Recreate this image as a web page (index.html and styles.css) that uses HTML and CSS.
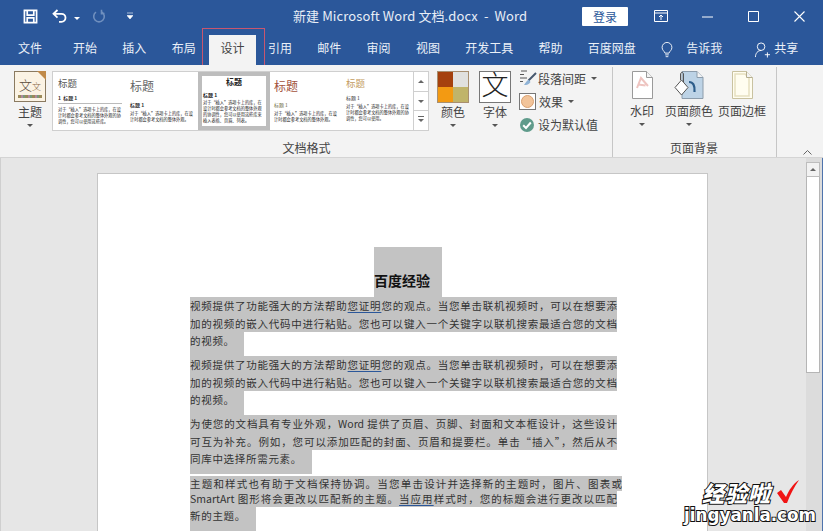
FILE: index.html
```html
<!DOCTYPE html>
<html lang="zh-CN">
<head>
  <meta charset="UTF-8" />
  <title>新建 Microsoft Word 文档.docx - Word</title>
  <link rel="stylesheet" href="styles.css">
</head>
<body>
  <div class="app">
    <header class="titlebar">
      <div class="qat">
        <svg class="ic-save" width="15" height="15" viewBox="0 0 16 16"><path d="M1.500 1.500h13v13h-13z M4.500 1.500v5h7v-5 M4.500 14.500v-5h7v5" fill="none" stroke="#fff" stroke-width="1.800"/></svg>
        <svg class="ic-undo" width="16" height="14" viewBox="0 0 16 14"><path d="M5.500 1 1.500 4.800l4 3.800M2 4.800h7.500a4 4 0 0 1 0 8H7" fill="none" stroke="#fff" stroke-width="1.800"/></svg>
        <span class="caret caret-white"></span>
        <svg class="ic-redo" width="14" height="14" viewBox="0 0 14 14"><path d="M4 3.200a5.300 5.300 0 1 0 6 0M9.500 .8v3.800h3" fill="none" stroke="#6f8fbe" stroke-width="1.600"/></svg>
        <svg class="ic-custom" width="6" height="8" viewBox="0 0 6 8"><path d="M0 1h6M0 3.500h6l-3 3.500z" fill="#fff" stroke="#fff" stroke-width=".6"/></svg>
      </div>
      <div class="doc-title">新建 Microsoft Word 文档.docx&nbsp; -&nbsp; Word</div>
      <div class="win">
        <button class="login">登录</button>
        <svg class="ic-display" width="14" height="12" viewBox="0 0 14 12"><path d="M.5 .5h13v11H.5zM.5 3h13M7 10V5M5 7l2-2 2 2" fill="none" stroke="#fff"/></svg>
        <svg class="ic-min" width="11" height="11" viewBox="0 0 11 11"><path d="M0 6h11" stroke="#fff"/></svg>
        <svg class="ic-max" width="11" height="11" viewBox="0 0 11 11"><path d="M.5 .5h10v10H.5z" fill="none" stroke="#fff"/></svg>
        <svg class="ic-close" width="11" height="11" viewBox="0 0 11 11"><path d="M.5 .5l10 10M10.500 .5l-10 10" stroke="#fff" stroke-width="1.100"/></svg>
      </div>
    </header>

    <nav class="tabs">
      <span class="tab tab-file">文件</span>
      <span class="tab">开始</span>
      <span class="tab">插入</span>
      <span class="tab">布局</span>
      <span class="tab tab-active">设计</span>
      <span class="tab">引用</span>
      <span class="tab">邮件</span>
      <span class="tab">审阅</span>
      <span class="tab">视图</span>
      <span class="tab">开发工具</span>
      <span class="tab">帮助</span>
      <span class="tab">百度网盘</span>
      <svg class="ic-bulb" width="12" height="16" viewBox="0 0 13 18"><path d="M4.200 12.500C3.500 10 1 9.500 1 6a5.500 5.500 0 0 1 11 0c0 3.500-2.500 4-3.200 6.500zM4.500 14.500h4M5 16.500h3" fill="none" stroke="#fff"/></svg>
      <span class="tab tab-tell">告诉我</span>
      <svg class="ic-user" width="17" height="16" viewBox="0 0 17 17"><path d="M7 1a4 4 0 0 1 0 8 4 4 0 0 1 0-8zM1 16c0-4 2.500-7 6-7M11 13.500h5.500M13.700 11v5.500" fill="none" stroke="#fff"/></svg>
      <span class="tab tab-share">共享</span>
    </nav>

    <section class="ribbon">
      <div class="group group-format">
        <div class="group-body">
          <div class="big-btn btn-theme">
            <div class="theme-icon">
              <span class="theme-a">文</span><span class="theme-b">文</span>
              <span class="theme-dots"></span>
              <span class="theme-fold"></span>
            </div>
            <span class="big-label">主题</span>
            <span class="caret"></span>
          </div>

          <div class="gallery">
            <div class="thumb">
              <div class="th-title th-small">标题</div>
              <div class="th-head th-rule">1&nbsp; 标题 1</div>
              <p class="th-text">对于“插入”选项卡上的库，在设计时都会参考文档的整体外观的协调性，您可以使用这些库。</p>
            </div>
            <div class="thumb">
              <div class="th-title th-big">标题</div>
              <div class="th-head">标题 1</div>
              <p class="th-text">对于“插入”选项卡上的库，在设计时都会参考文档的整体外观。</p>
            </div>
            <div class="thumb thumb-sel">
              <div class="th-title th-center">标题</div>
              <div class="th-head th-bold">标题 1</div>
              <p class="th-text">对于“插入”选项卡上的库，在设计时都会参考文档的整体外观的协调性，您可以使用这些库来插入表格、页眉、列表。</p>
            </div>
            <div class="thumb">
              <div class="th-title th-big th-red">标题</div>
              <div class="th-head th-olive">标题 1</div>
              <p class="th-text">对于“插入”选项卡上的库，在设计时都会参考文档的整体外观。</p>
            </div>
            <div class="thumb">
              <div class="th-title th-small th-tan">标题</div>
              <div class="th-head th-tan th-thin">标题 1</div>
              <p class="th-text">对于“插入”选项卡上的库，在设计时都会参考文档的整体外观的协调性，您可以使用。</p>
            </div>
            <div class="gallery-scroll">
              <span class="gs-btn"><i class="tri-up"></i></span>
              <span class="gs-btn"><i class="tri-down"></i></span>
              <span class="gs-btn gs-more"><i class="tri-down"></i></span>
            </div>
          </div>

          <div class="big-btn btn-colors">
            <div class="colors-icon">
              <i class="c1"></i><i class="c2"></i><i class="c3"></i><i class="c4"></i>
            </div>
            <span class="big-label">颜色</span>
            <span class="caret"></span>
          </div>

          <div class="big-btn btn-font">
            <div class="font-icon">文</div>
            <span class="big-label">字体</span>
            <span class="caret"></span>
          </div>

          <div class="small-col">
            <div class="small-btn">
              <svg class="ic-spacing" width="18" height="17" viewBox="0 0 18 17"><path d="M2 1h6M1 4.500h4M1 8h7M1 11.500h3" stroke="#555" fill="none"/><path d="M17 3 9.500 10.500" stroke="#46586e" stroke-width="2"/><path d="M10 10c-2 0-3 2-5 5 3 0 5-.5 6.500-3z" fill="#8fb3d6"/></svg>
              <span>段落间距</span><span class="caret caret-side"></span>
            </div>
            <div class="small-btn">
              <span class="effect-icon"><i></i></span>
              <span>效果</span><span class="caret caret-side"></span>
            </div>
            <div class="small-btn">
              <svg width="16" height="16" viewBox="0 0 16 16"><circle cx="8" cy="8" r="7" fill="#5f9b8b"/><path d="M4.200 8.200 7 11l4.800-5.500" fill="none" stroke="#fff" stroke-width="2"/></svg>
              <span>设为默认值</span>
            </div>
          </div>
        </div>
        <div class="group-name">文档格式</div>
      </div>

      <div class="group group-page">
        <div class="group-body">
          <div class="big-btn btn-mark">
            <svg width="21" height="28" viewBox="0 0 21 28"><path d="M.5 .5h14l6 6v21H.5z" fill="#fff" stroke="#9a9a9a"/><path d="M14.500 .5v6h6" fill="#f3f3f3" stroke="#9a9a9a"/><path d="M5 17 9 7l7 8M6.500 13.500l7 1" fill="none" stroke="#eec4c0" stroke-width="2"/></svg>
            <span class="big-label">水印</span>
            <span class="caret"></span>
          </div>
          <div class="big-btn btn-pagecolor">
            <svg width="40" height="28" viewBox="0 0 40 28"><path d="M17 .5h15l6 6v21H17z" fill="#bdd3e6" stroke="#8c9cab"/><path d="M32 .5v6h6" fill="#f3f3f3" stroke="#8c9cab"/><path d="M10 16.500 16.500 9l6.500 7.500-6.500 7.500z" fill="#fff" stroke="#555"/><path d="M24 11c4 0 6 3 5.500 10" fill="none" stroke="#2d5d8a" stroke-width="2.200"/><path d="M15.500 9V3c0-2 3-2 3 0v8" fill="none" stroke="#555"/></svg>
            <span class="big-label">页面颜色</span>
            <span class="caret"></span>
          </div>
          <div class="big-btn btn-border">
            <svg width="21" height="28" viewBox="0 0 21 28"><path d="M.5 .5h14l6 6v21H.5z" fill="#fffdf0" stroke="#c9c2a0" stroke-width="1"/><path d="M3 3h10l4 4v18H3z" fill="none" stroke="#e6dfc0" stroke-width="1.500"/><path d="M14.500 .5v6h6" fill="#f3f3f3" stroke="#b5ae90"/></svg>
            <span class="big-label">页面边框</span>
          </div>
        </div>
        <div class="group-name">页面背景</div>
      </div>

      <svg class="ic-collapse" width="9" height="5" viewBox="0 0 9 5"><path d="M.5 4.500l4-4 4 4" fill="none" stroke="#666"/></svg>
    </section>

    <main class="workspace">
      <div class="canvas">
        <article class="page">
          <div class="doc-title-line"><h1 class="doc-heading">百度经验</h1></div>
          <div class="para">
            <div class="ln">视频提供了功能强大的方法帮助<u>您证明</u>您的观点。当您单击联机视频时，可以在想要添</div>
            <div class="ln">加的视频的嵌入代码中进行粘贴。您也可以键入一个关键字以联机搜索最适合您的文档</div>
            <div class="ln ln-end ln-w54">的视频。</div>
          </div>
          <div class="para">
            <div class="ln">视频提供了功能强大的方法帮助<u>您证明</u>您的观点。当您单击联机视频时，可以在想要添</div>
            <div class="ln">加的视频的嵌入代码中进行粘贴。您也可以键入一个关键字以联机搜索最适合您的文档</div>
            <div class="ln ln-end ln-w54">的视频。</div>
          </div>
          <div class="para">
            <div class="ln">为使您的文档具有专业外观，Word 提供了页眉、页脚、封面和文本框设计，这些设计</div>
            <div class="ln">可互为补充。例如，您可以添加匹配的封面、页眉和提要栏。单击“插入”，然后从不</div>
            <div class="ln ln-end ln-w122">同库中选择所需元素。</div>
          </div>
          <div class="para para-last">
            <div class="ln ln-wide">主题和样式也有助于文档保持协调。当您单击设计并选择新的主题时，图片、图表或</div>
            <div class="ln">SmartArt 图形将会更改以匹配新的主题。<u>当应用</u>样式时，您的标题会进行更改以匹配</div>
            <div class="ln ln-end ln-w66">新的主题。</div>
          </div>
        </article>
      </div>
      <aside class="scrollbar">
        <span class="sb-up"><i class="tri-up"></i></span>
        <span class="sb-thumb"></span>
      </aside>
    </main>

    <div class="tab-mark"></div>
    <div class="watermark">
      <div class="wm-top">经验啦
        <svg class="wm-check" width="24" height="25" viewBox="0 0 24 25"><path d="M1 14l4-3 5 7C13 11 17 5 23 1 18 8 14 16 11 24H8z" fill="#f01414"/></svg>
      </div>
      <div class="wm-url">jingyanla.com</div>
    </div>
  </div>
</body>
</html>
```

FILE: styles.css
```css
* { box-sizing: border-box; }
html, body {
  margin: 0;
  height: 100%;
  overflow: hidden;
}
body {
  font-family: "Noto Sans CJK SC", "Liberation Sans", sans-serif;
  color: #444;
}
.app {
  position: relative;
  width: 823px;
  height: 531px;
  overflow: hidden;
  display: flex;
  flex-direction: column;
}

/* title bar */
.titlebar {
  height: 32px;
  background: #2b579a;
  color: #e8eef7;
  display: flex;
  align-items: center;
  position: relative;
}
.qat {
  display: flex;
  align-items: center;
  padding-left: 23px;
  width: 293px;
}
.ic-undo { margin-left: 14px; }
.caret-white { margin-left: 6px; margin-top: 0; border-top-color: #fff !important; }
.ic-redo { margin-left: 12px; }
.ic-custom { margin-left: 21px; }
.doc-title {
  font-size: 13px;
  white-space: nowrap;
  width: 289px;
  margin-top: -2px;
  letter-spacing: .1px;
  font-family: "Noto Sans CJK SC", "Open Sans", sans-serif;
}
.win {
  display: flex;
  align-items: center;
}
.login {
  width: 46px;
  height: 19px;
  border: 0;
  padding: 0;
  background: #fff;
  color: #2b579a;
  border-radius: 1px;
  font: 12px/19px "Noto Sans CJK SC", sans-serif;
}
.ic-display { margin-left: 26px; }
.ic-min { margin-left: 34px; }
.ic-max { margin-left: 35px; }
.ic-close { margin-left: 35px; }

/* tabs */
.tabs {
  height: 33px;
  background: #2b579a;
  display: flex;
  align-items: flex-end;
  padding-left: 18px;
  color: #fff;
  font-size: 12px;
}
.tab {
  line-height: 26px;
  height: 30px;
  margin-right: 25.300px;
  white-space: nowrap;
  color: #eaf0f8;
}
.tab-file { margin-right: 31px; }
.tab-active {
  width: 47px;
  margin: 0 12px 0 -12px;
  background: #f3f3f3;
  color: #444;
  text-align: center;
}
.ic-bulb { margin: 0 13px 7px 0; }
.tab-tell { margin-right: 32px; }
.ic-user { margin: 0 3px 7px 0; }
.tab-share { margin-right: 0; }
.tab-mark {
  position: absolute;
  left: 202px;
  top: 28px;
  width: 63px;
  height: 37px;
  border: 1px solid #c8566f;
  border-bottom: 0;
}

/* ribbon */
.ribbon {
  height: 93px;
  background: #f3f3f3;
  border-bottom: 1px solid #d4d4d4;
  display: flex;
  position: relative;
  font-size: 12px;
  color: #444;
}
.group {
  height: 90px;
  margin-top: 2px;
  border-right: 1px solid #c6c6c6;
  display: flex;
  flex-direction: column;
}
.group-format { width: 613px; padding-left: 14px; }
.group-page { width: 164px; padding-left: 17px; }
.group-body {
  display: flex;
  height: 68px;
}
.group-name {
  text-align: center;
  line-height: 18px;
  margin-top: 4px;
}
.group-format .group-name { padding-right: 13px; }
.group-page .group-name { padding-right: 18px; }
.big-btn {
  display: flex;
  flex-direction: column;
  align-items: center;
  padding-top: 4px;
}
.big-label {
  line-height: 16px;
  white-space: nowrap;
}
.caret {
  display: block;
  width: 0;
  height: 0;
  border-left: 3px solid transparent;
  border-right: 3px solid transparent;
  border-top: 3px solid #555;
  margin-top: 4px;
}
.caret-side { margin: 0 0 0 2px; }

.btn-theme { width: 32px; }
.theme-icon {
  position: relative;
  width: 32px;
  height: 31px;
  margin-bottom: 2px;
  background: #fbf3e4;
  border: 1px solid #8a7a60;
}
.theme-a, .theme-b {
  position: absolute;
  line-height: 1;
  color: #5a4a3a;
  font-family: "Liberation Serif", "Noto Sans CJK SC", serif;
  font-weight: 300;
}
.theme-a { left: 4px; top: 7px; font-size: 13px; }
.theme-b { left: 17px; top: 11px; font-size: 9px; color: #8a6a4a; }
.theme-dots {
  position: absolute;
  left: 3px;
  right: 3px;
  bottom: 3px;
  height: 3px;
  background: repeating-linear-gradient(90deg, #9b8a5a 0 3px, #b08aa0 3px 5px, #7a9a7a 5px 7px);
}
.theme-fold {
  position: absolute;
  right: -1px;
  top: -1px;
  border-top: 9px solid #c08a4a;
  border-left: 9px solid transparent;
}

.gallery {
  display: flex;
  width: 377px;
  height: 60px;
  margin-left: 6px;
  margin-top: 4px;
  background: #fff;
  border: 1px solid #cfcfcf;
  padding-left: 1px;
}
.thumb {
  width: 72px;
  height: 58px;
  padding: 5px 4px 0;
  color: #333;
  flex: none;
}
.thumb-sel {
  border: 4px solid #bdbdbd;
  padding: 1px 1px 0;
}
.th-title { line-height: 14px; height: 16px; }
.th-small { font-size: 9.500px; color: #555; margin-top: -1px; }
.th-big { font-size: 12px; color: #666; height: 20px; line-height: 18px; }
.th-center { font-size: 8px; font-weight: 700; text-align: center; color: #222; height: 12px; line-height: 10px; }
.th-red { color: #a3523c; }
.th-tan { color: #c39b5e; }
.th-head {
  font-size: 5px;
  line-height: 7px;
  font-weight: 700;
  color: #333;
  margin-top: 4px;
}
.th-rule { border-bottom: 1px solid #bbb; padding-bottom: 2px; margin-top: 2px; }
.th-bold { color: #222; margin-top: 2px; }
.th-olive { color: #6c6a3a; font-weight: 400; }
.th-thin { font-weight: 400; margin-top: 2px; }
.th-text {
  font-size: 4.200px;
  line-height: 6px;
  margin: 2px 0 0;
  color: #222;
}
.thumb-sel .th-text { margin: 1px 0 0; }
.gallery-scroll {
  width: 15px;
  flex: none;
  margin-left: -1px;
  border-left: 1px solid #cfcfcf;
  display: flex;
  flex-direction: column;
}
.gs-btn {
  flex: 1;
  display: flex;
  align-items: center;
  justify-content: center;
  border-bottom: 1px solid #cfcfcf;
}
.gs-btn:last-child { border-bottom: 0; }
.gs-more { border-top: 0; position: relative; }
.gs-more::before {
  content: "";
  position: absolute;
  left: 4px;
  right: 4px;
  top: 5px;
  border-top: 1px solid #666;
}
.tri-up, .tri-down {
  display: block;
  width: 0;
  height: 0;
  border-left: 3px solid transparent;
  border-right: 3px solid transparent;
}
.tri-up { border-bottom: 3px solid #666; }
.tri-down { border-top: 3px solid #666; }

.btn-colors { width: 32px; margin-left: 8px; }
.colors-icon {
  width: 32px;
  height: 32px;
  margin-bottom: 1px;
  display: grid;
  grid-template-columns: 1fr 1fr;
  grid-template-rows: 1fr 1fr;
  border: 1px solid #a88f70;
}
.c1 { background: #a5410e; }
.c2 { background: #e1e1df; }
.c3 { background: #f39a12; }
.c4 { background: #c0b46a; }
.btn-font { width: 32px; margin-left: 10px; }
.font-icon {
  width: 32px;
  height: 32px;
  margin-bottom: 1px;
  border: 1px solid #777;
  background: #fff;
  color: #222;
  font-size: 27px;
  line-height: 28px;
  text-align: center;
  font-family: "Liberation Serif", "Noto Sans CJK SC", serif;
  font-weight: 300;
}
.small-col {
  margin-left: 8px;
  padding-top: 2px;
  display: flex;
  flex-direction: column;
  gap: 4px;
}
.small-btn {
  height: 19px;
  display: flex;
  align-items: center;
  gap: 3px;
  white-space: nowrap;
}
.ic-spacing { margin-right: -2px; }
.effect-icon {
  width: 17px;
  height: 17px;
  border: 1px solid #777;
  background: #fff;
  display: flex;
  align-items: center;
  justify-content: center;
}
.effect-icon i {
  display: block;
  width: 13px;
  height: 13px;
  border-radius: 50%;
  background: #f2c49a;
  border: 1px solid #d9a070;
}

.btn-mark { width: 24px; }
.btn-mark svg { margin-bottom: 4px; }
.btn-pagecolor { width: 48px; margin-left: 11px; }
.btn-pagecolor svg { margin-bottom: 4px; margin-right: 8px; }
.btn-border { width: 48px; margin-left: 5px; }
.btn-border svg { margin-bottom: 4px; margin-right: 0; }
.ic-collapse {
  position: absolute;
  left: 803px;
  top: 85px;
}

/* document */
.workspace {
  flex: 1;
  min-height: 0;
  display: flex;
  background: #e6e6e6;
  border-left: 1px solid #cfcfcf;
}
.canvas {
  width: 805px;
  padding: 15px 0 0 96px;
}
.page {
  width: 611px;
  height: 400px;
  background: #fff;
  border: 1px solid #c6c6c6;
  padding: 73px 0 0 92px;
  color: #333;
}
.doc-title-line {
  height: 50px;
  padding-left: 184px;
}
.doc-heading {
  margin: 0;
  width: 68px;
  height: 50px;
  background: #c3c3c3;
  color: #111;
  font-size: 14px;
  font-weight: 700;
  line-height: 18px;
  padding-top: 24px;
  white-space: nowrap;
}
.para .ln {
  width: 427px;
  height: 17.500px;
  background: #c3c3c3;
  font-size: 10.500px;
  line-height: 17.500px;
  text-align: justify;
  text-align-last: justify;
  overflow: hidden;
}
.para .ln-end { height: 24px; text-align-last: left; letter-spacing: .7px; }
.para .ln-wide { width: 432px; }
.para .ln-w54 { width: 54px; }
.para .ln-w122 { width: 122px; }
.para .ln-w66 { width: 66px; }
.para-last { margin-top: 2px; }
.para-last .ln-wide { height: 15px; line-height: 15px; }
.para-last .ln:nth-child(2) { height: 16px; line-height: 16px; }
.ln u {
  text-decoration-color: #2b579a;
  text-underline-offset: 2px;
}
.scrollbar {
  width: 17px;
  background: #dcdcdc;
  border-right: 1px solid #4f74ad;
  padding: 4px 2px 0 0;
  display: flex;
  flex-direction: column;
}
.sb-up {
  height: 15px;
  background: #f2f2f2;
  border: 1px solid #bdbdbd;
  display: flex;
  align-items: center;
  justify-content: center;
}
.sb-thumb {
  height: 196px;
  background: #fff;
  border: 1px solid #b5b5b5;
  border-top: 0;
}

/* site stamp in the corner of the picture */
.watermark {
  position: absolute;
  left: 684px;
  top: 479px;
  color: #fff;
  font-weight: 900;
  -webkit-text-stroke: 2px #111;
  paint-order: stroke fill;
  white-space: nowrap;
}
.wm-top {
  font-size: 22px;
  line-height: 27px;
  letter-spacing: 1px;
  padding-left: 18px;
  display: flex;
  align-items: center;
  font-style: italic;
}
.wm-check { margin-left: 5px; margin-top: -3px; }
.wm-url {
  font-family: "DejaVu Sans", sans-serif;
  font-size: 16.800px;
  font-weight: 700;
  line-height: 19px;
}
```
